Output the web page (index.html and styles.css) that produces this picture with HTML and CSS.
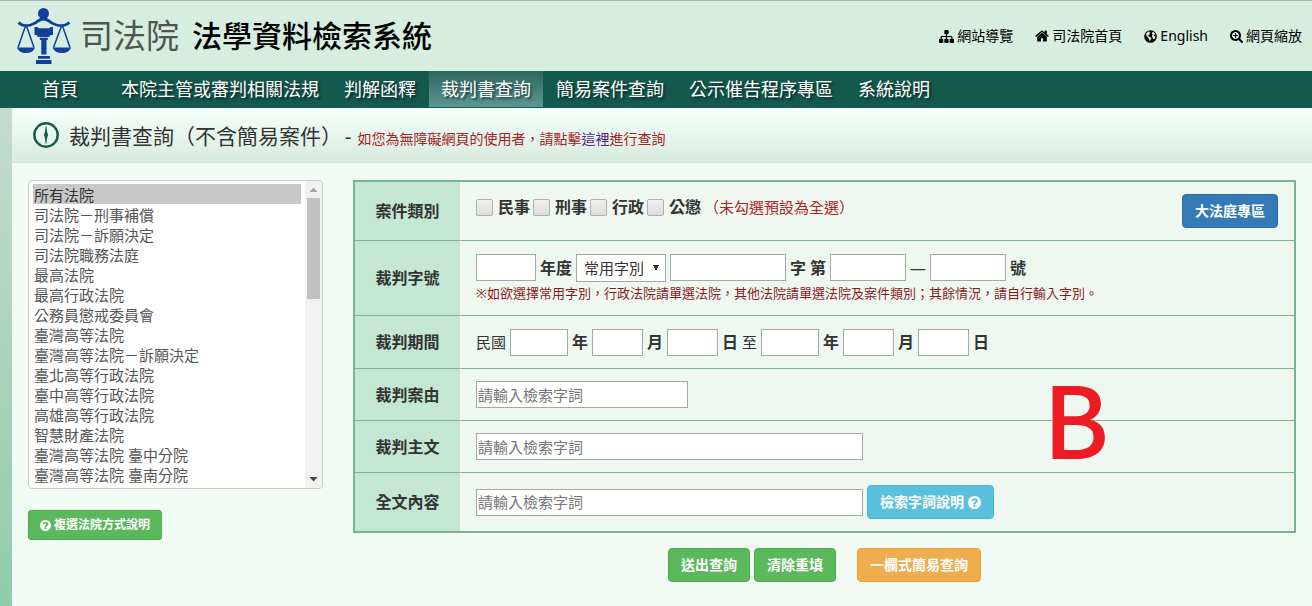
FILE: index.html
```html
<!DOCTYPE html>
<html lang="zh-Hant">
<head>
<meta charset="utf-8">
<meta name="viewport" content="width=device-width, initial-scale=1">
<title>司法院法學資料檢索系統</title>
<link rel="stylesheet" href="styles.css">
</head>
<body>
<svg width="0" height="0" class="sprite" aria-hidden="true">
  <symbol id="i-question" viewBox="128 128 1536 1536"><path d="M1024 1376v-192q0-14-9-23t-23-9h-192q-14 0-23 9t-9 23v192q0 14 9 23t23 9h192q14 0 23-9t9-23zm256-672q0-88-55.500-163t-138.500-116-170-41q-243 0-371 213-15 24 8 42l132 100q7 6 19 6 16 0 25-12 53-68 86-92 34-24 86-24 48 0 85.500 26t37.500 59q0 38-20 61t-68 45q-63 28-115.500 86.500t-52.500 125.500v36q0 14 9 23t23 9h192q14 0 23-9t9-23q0-19 21.500-49.500t54.500-49.500q32-18 49-28.500t46-35 44.500-48 28-60.500 12.500-81zm384 192q0 209-103 385.500t-279.500 279.500-385.500 103-385.500-103-279.500-279.500-103-385.500 103-385.500 279.500-279.500 385.500-103 385.500 103 279.500 279.500 103 385.500z"/></symbol>
</svg>

<header class="header">
  <a class="brand" href="#">
    <svg class="emblem" viewBox="16 7 56 58" aria-hidden="true">
      <g fill="#0f419b">
        <circle cx="43.500" cy="13.500" r="5.500"/>
        <path d="M34.500 27h3l1.500 1.200h10l1.500-1.200h2.500v8h-2.500q-.5 2-2.500 2h-9q-2 0-2.500-2h-2z"/>
        <path d="M41.300 40h5.200v14.500h-5.200zM38 56h12v2.800h-12zM36 60h15.500v4h-15.500zM39.800 37.800h8v2.200h-8z"/>
        <path d="M17 47.500h18q-2 5.500-9 5.500t-9-5.500zM52.500 47.500h18.500q-2 5.500-9 5.500t-9.500-5.500z"/>
      </g>
      <g fill="none" stroke="#0f419b">
        <path d="M18.500 22.500q4.500 4.500 12 2.500 5-1.500 7.500-4 5.500-4 11 0 2.500 2.500 7.500 4 8 2 13-2.500" stroke-width="2.800"/>
        <path d="M25.500 26l-7.500 21.500M26.500 26l7.500 21.500M61.500 26l-8 21.500M62.500 26l7.500 21.500" stroke-width="1.500"/>
      </g>
    </svg>
    <span class="brand-org">司法院</span>
    <span class="brand-name">法學資料檢索系統</span>
  </a>
  <nav class="quick">
    <a href="#"><svg width="15" height="15" viewBox="0 0 1792 1792" aria-hidden="true"><path d="M1792 1248v320q0 40-28 68t-68 28h-320q-40 0-68-28t-28-68v-320q0-40 28-68t68-28h96v-192h-512v192h96q40 0 68 28t28 68v320q0 40-28 68t-68 28h-320q-40 0-68-28t-28-68v-320q0-40 28-68t68-28h96v-192h-512v192h96q40 0 68 28t28 68v320q0 40-28 68t-68 28h-320q-40 0-68-28t-28-68v-320q0-40 28-68t68-28h96v-192q0-52 38-90t90-38h512v-192h-96q-40 0-68-28t-28-68v-320q0-40 28-68t68-28h320q40 0 68 28t28 68v320q0 40-28 68t-68 28h-96v192h512q52 0 90 38t38 90v192h96q40 0 68 28t28 68z"/></svg>網站導覽</a>
    <a href="#"><svg width="14" height="14" viewBox="64 64 1664 1664" aria-hidden="true"><path d="M1472 992v480q0 26-19 45t-45 19h-384v-384h-256v384h-384q-26 0-45-19t-19-45v-480q0-1 .5-3t.5-3l575-474 575 474q1 2 1 6zm223-69l-62 74q-8 9-21 11h-3q-13 0-21-7l-692-577-692 577q-12 8-24 7-13-2-21-11l-62-74q-8-10-7-23.500t11-21.500l719-599q32-26 76-26t76 26l244 204v-195q0-14 9-23t23-9h192q14 0 23 9t9 23v408l219 182q10 8 11 21.500t-7 23.500z"/></svg>司法院首頁</a>
    <a href="#"><svg width="13" height="13" viewBox="0 0 13 13" aria-hidden="true"><circle cx="6.500" cy="6.500" r="6.300"/><path d="M2.200 3.200l2.300-1.700 1.500.5-.5 1.500.5.500-2 1.500 2 1.500 1.500 1-1 2-.8 1.500-1-3-1-1.500-1.200-1zM8.500 1.800l2 1 1 1.800-2 .2.800 1.200 1.200.5-.8 2.500-1.400.3-.8-1.800-.5-1.500.5-1.500-.5-1z" fill="#d7ede0"/></svg>English</a>
    <a href="#"><svg width="13" height="13" viewBox="64 128 1664 1664" aria-hidden="true"><path d="M1088 800v64q0 13-9.500 22.500t-22.500 9.500h-224v224q0 13-9.500 22.500t-22.500 9.500h-64q-13 0-22.500-9.500t-9.500-22.500v-224h-224q-13 0-22.500-9.500t-9.500-22.500v-64q0-13 9.500-22.500t22.500-9.500h224v-224q0-13 9.500-22.500t22.500-9.500h64q13 0 22.500 9.500t9.500 22.500v224h224q13 0 22.500 9.500t9.500 22.500zm128 32q0-185-131.500-316.500t-316.500-131.500-316.500 131.500-131.500 316.500 131.500 316.500 316.500 131.500 316.500-131.500 131.500-316.500zm512 832q0 53-37.500 90.500t-90.500 37.500q-54 0-90-38l-343-342q-179 124-399 124-143 0-273.500-55.500t-225-150-150-225-55.500-273.500 55.500-273.500 150-225 225-150 273.500-55.500 273.500 55.500 225 150 150 225 55.500 273.500q0 220-124 399l343 343q37 37 37 90z"/></svg>網頁縮放</a>
  </nav>
</header>

<nav class="menu">
  <a class="menu-home" href="#">首頁</a>
  <a href="#">本院主管或審判相關法規</a>
  <a href="#">判解函釋</a>
  <a class="is-active" href="#" aria-current="page">裁判書查詢</a>
  <a href="#">簡易案件查詢</a>
  <a href="#">公示催告程序專區</a>
  <a href="#">系統說明</a>
</nav>

<main class="main">
  <div class="title-bar">
    <svg width="26" height="26" viewBox="0 0 26 26" aria-hidden="true"><circle cx="13" cy="13" r="11.700" fill="none" stroke="#175a4c" stroke-width="2.400"/><path d="M13 5.500l2 7.500-2 7.500-2-7.500z" fill="#175a4c"/><path d="M13 4.500v17" stroke="#175a4c"/></svg>
    <h1>裁判書查詢（不含簡易案件）</h1>
    <span class="dash">-</span>
    <p class="title-note">如您為無障礙網頁的使用者，請點擊<a href="#">這裡</a>進行查詢</p>
  </div>

  <form class="search">
    <div class="courts">
      <div class="court-box">
        <select class="court-list" multiple size="15" aria-label="法院">
          <option selected>所有法院</option>
          <option>司法院－刑事補償</option>
          <option>司法院－訴願決定</option>
          <option>司法院職務法庭</option>
          <option>最高法院</option>
          <option>最高行政法院</option>
          <option>公務員懲戒委員會</option>
          <option>臺灣高等法院</option>
          <option>臺灣高等法院－訴願決定</option>
          <option>臺北高等行政法院</option>
          <option>臺中高等行政法院</option>
          <option>高雄高等行政法院</option>
          <option>智慧財產法院</option>
          <option>臺灣高等法院 臺中分院</option>
          <option>臺灣高等法院 臺南分院</option>
          <option>臺灣高等法院 高雄分院</option>
          <option>臺灣高等法院 花蓮分院</option>
          <option>臺灣臺北地方法院</option>
          <option>臺灣士林地方法院</option>
          <option>臺灣新北地方法院</option>
        </select>
        <div class="scrollbar" aria-hidden="true">
          <svg width="17" height="17" viewBox="0 0 17 17"><path d="M4.500 11l4-4.500 4 4.500z" fill="#a3a3a3"/></svg>
          <div class="track"><div class="thumb"></div></div>
          <svg width="17" height="17" viewBox="0 0 17 17"><path d="M4.500 6h8l-4 4.500z" fill="#444"/></svg>
        </div>
      </div>
      <button type="button" class="btn btn-green btn-small"><svg width="11" height="11" aria-hidden="true"><use href="#i-question"/></svg>複選法院方式說明</button>
    </div>

    <div class="criteria">
      <table class="grid">
        <tbody>
        <tr>
          <th scope="row">案件類別</th>
          <td>
            <div class="line line-top">
              <div class="checks">
                <label><input type="checkbox">民事</label>
                <label><input type="checkbox">刑事</label>
                <label><input type="checkbox">行政</label>
                <label><input type="checkbox">公懲</label>
                <span class="hint">（未勾選預設為全選）</span>
              </div>
              <button type="button" class="btn btn-blue">大法庭專區</button>
            </div>
          </td>
        </tr>
        <tr>
          <th scope="row">裁判字號</th>
          <td>
            <div class="line line-number">
              <input class="box w-year" type="text" id="jyear"><label for="jyear">年度</label>
              <select class="pick" aria-label="常用字別"><option>常用字別</option></select>
              <input class="box w-word" type="text" id="jword"><label for="jword">字</label>
              <label for="jno">第</label><input class="box w-no" type="text" id="jno">
              <span class="to">—</span>
              <input class="box w-no" type="text" id="jnoend"><label for="jnoend">號</label>
            </div>
            <p class="remark">※如欲選擇常用字別，行政法院請單選法院，其他法院請單選法院及案件類別；其餘情況，請自行輸入字別。</p>
          </td>
        </tr>
        <tr>
          <th scope="row">裁判期間</th>
          <td>
            <div class="line line-date">
              <span class="plain">民國</span>
              <input class="box w-y" type="text" id="y1"><label for="y1">年</label>
              <input class="box w-md" type="text" id="m1"><label for="m1">月</label>
              <input class="box w-md" type="text" id="d1"><label for="d1">日</label>
              <span class="plain">至</span>
              <input class="box w-y" type="text" id="y2"><label for="y2">年</label>
              <input class="box w-md" type="text" id="m2"><label for="m2">月</label>
              <input class="box w-md" type="text" id="d2"><label for="d2">日</label>
            </div>
          </td>
        </tr>
        <tr>
          <th scope="row"><label for="cause">裁判案由</label></th>
          <td><div class="line"><input class="box w-mid" type="text" id="cause" placeholder="請輸入檢索字詞"></div></td>
        </tr>
        <tr>
          <th scope="row"><label for="holding">裁判主文</label></th>
          <td><div class="line"><input class="box w-long" type="text" id="holding" placeholder="請輸入檢索字詞"></div></td>
        </tr>
        <tr>
          <th scope="row"><label for="full">全文內容</label></th>
          <td>
            <div class="line">
              <input class="box w-long" type="text" id="full" placeholder="請輸入檢索字詞">
              <button type="button" class="btn btn-cyan">檢索字詞說明<svg width="13" height="13" aria-hidden="true"><use href="#i-question"/></svg></button>
            </div>
          </td>
        </tr>
        </tbody>
      </table>
      <span class="mark">B</span>
      <div class="actions">
        <button type="submit" class="btn btn-green">送出查詢</button>
        <button type="reset" class="btn btn-green">清除重填</button>
        <button type="button" class="btn btn-orange">一欄式簡易查詢</button>
      </div>
    </div>
  </form>
</main>
</body>
</html>
```
FILE: styles.css
```css
* { box-sizing: border-box; }

body {
  margin: 0;
  min-height: 100vh;
  display: flex;
  flex-direction: column;
  background: #f2faf4;
  color: #333;
  font-family: "Noto Sans", "Noto Sans CJK TC", sans-serif;
  font-size: 16px;
  line-height: 20px;
}

a { color: inherit; text-decoration: none; }
h1, p { margin: 0; }
button, input, select { font-family: inherit; margin: 0; }
.sprite { position: absolute; }

/* header */
.header {
  display: flex;
  align-items: center;
  justify-content: space-between;
  height: 71px;
  padding: 0 10px 0 16px;
  border-top: 1px solid #a9b8af;
  background: #d7ede0;
  color: #000;
}
.brand { display: flex; align-items: center; white-space: nowrap; }
.emblem { width: 56px; height: 58px; }
.brand-org { margin-left: 8px; font-size: 33px; line-height: 40px; color: #4c5550; }
.brand-name { margin-left: 13px; font-size: 30px; line-height: 40px; font-weight: 500; }
.quick { display: flex; gap: 22px; font-size: 14px; white-space: nowrap; }
.quick a { display: flex; align-items: center; gap: 3px; }

/* main menu */
.menu {
  display: flex;
  gap: 1px;
  height: 37px;
  padding: 0 12px;
  background: #14594d;
  color: #fff;
  font-size: 18px;
  line-height: 36px;
  white-space: nowrap;
  text-shadow: 2px 2px 2px rgba(0, 0, 0, .5);
}
.menu a { padding: 0 12px; margin-bottom: 1px; }
.menu .menu-home { padding: 0 30px; }
.menu .is-active { background: linear-gradient(#2b665f, #5c9690); }

/* page body with the coloured strip at its left */
.main {
  flex: 1;
  padding-left: 12px;
  background: linear-gradient(#c5dbcf, #90cca8) left / 12px 100% no-repeat;
}
.title-bar {
  display: flex;
  align-items: center;
  height: 55px;
  padding-left: 21px;
  background: linear-gradient(#f6fffb, #d7ebdf);
  border-bottom: 1px solid #d3e6db;
  white-space: nowrap;
}
.title-bar h1 { margin-left: 10px; padding-top: 2px; font-size: 21px; line-height: 28px; font-weight: 400; }
.dash { margin-left: 3px; padding-top: 4px; font-size: 20px; }
.title-note { margin-left: 6px; padding-top: 8px; font-size: 14px; color: #a52323; }
.title-note a { color: #551a8b; }

/* search form */
.search { display: flex; align-items: flex-start; gap: 30px; padding: 17px 16px 24px; }
.courts { flex: none; width: 295px; }
.court-box {
  display: flex;
  height: 309px;
  border: 1px solid #c6ccc8;
  border-radius: 4px;
  background: #fff;
  overflow: hidden;
}
.court-list {
  flex: 1;
  min-width: 0;
  padding: 3px 4px 0;
  border: 0;
  background: none;
  color: #555;
  font-size: 15px;
  outline: none;
  scrollbar-width: none;
}
.court-list option { height: 20px; min-height: 20px; padding: 0 1px; }
.court-list option:checked { background: #c8c8c8 linear-gradient(#c8c8c8, #c8c8c8); color: #333; }
.scrollbar { display: flex; flex-direction: column; width: 17px; background: #f1f1f1; }
.track { flex: 1; padding: 0 2px; }
.thumb { height: 37%; background: #c1c1c1; }

/* buttons */
.btn {
  display: inline-flex;
  align-items: center;
  justify-content: center;
  gap: 4px;
  height: 34px;
  padding: 0 12px;
  border: 1px solid;
  border-radius: 4px;
  color: #fff;
  font-size: 14px;
  font-weight: 700;
  line-height: 20px;
  white-space: nowrap;
}
.btn svg { fill: currentColor; }
.btn-small { height: 30px; gap: 3px; margin-top: 21px; padding: 0 11px; font-size: 12px; border-radius: 3px; }
.btn-green { background: #5cb85c; border-color: #4cae4c; }
.btn-blue { background: #337ab7; border-color: #2e6da4; }
.btn-cyan { background: #5bc0de; border-color: #46b8da; }
.btn-orange { background: #f0ad4e; border-color: #eea236; }

/* criteria table */
.criteria { position: relative; flex: 1; min-width: 0; }
.grid {
  width: 100%;
  border: 2px solid #7bb391;
  border-spacing: 0;
  background: #eef8f1;
}
.grid th, .grid td { padding: 12px 16px 12px 15px; border-bottom: 1px solid #7bb391; }
.grid tr:last-child > * { border-bottom: 0; }
.grid th {
  width: 106px;
  padding: 0;
  background: #c3e7d3;
  border-right: 1px solid #eef8f1;
  text-align: center;
}
.line { display: flex; align-items: center; gap: 4px; white-space: nowrap; }
.line label { font-weight: 700; }
.line-top { justify-content: space-between; align-items: flex-start; }
.line-number { height: 29px; }
.line-date { height: 28px; }
.plain { font-size: 15px; }
.to { width: 16px; text-align: center; }

.checks { display: flex; align-items: center; gap: 3px; padding-top: 3px; }
.checks label { display: flex; align-items: center; gap: 5px; }
.checks input {
  appearance: none;
  width: 17px;
  height: 17px;
  border: 1px solid #b0b0b0;
  border-radius: 2px;
  background: linear-gradient(#f0f0f0, #dcdcdc);
}
.hint { font-size: 15px; color: #b22222; }
.remark { padding-top: 1px; font-size: 13px; color: #8b1a1a; }

.box {
  height: 27px;
  padding: 1px;
  border: 1px solid #a3aaa6;
  background: #fff;
  font-size: 15px;
}
.box::placeholder { color: #757575; }
.w-year { width: 60px; }
.w-word { width: 116px; }
.w-no { width: 76px; }
.w-y { width: 58px; }
.w-md { width: 51px; }
.w-mid { width: 212px; }
.w-long { width: 387px; }
.pick {
  appearance: none;
  width: 90px;
  height: 28px;
  padding: 0 7px;
  border: 1px solid #a3aaa6;
  border-radius: 0;
  background: linear-gradient(to bottom right, #333 50%, transparent 50%) right 6px center / 3px 6px no-repeat,
    linear-gradient(to bottom left, #333 50%, transparent 50%) right 9px center / 3px 6px no-repeat, #fff;
  color: #333;
  font-size: 15px;
}

.actions { display: flex; justify-content: center; gap: 4px; margin-top: 15px; }
.actions .btn-orange { margin-left: 17px; }

/* large letter laid over the table */
.mark {
  position: absolute;
  top: 186px;
  right: 187px;
  color: #ed1c24;
  font-family: "Noto Sans CJK TC", sans-serif;
  font-size: 99px;
  font-weight: 500;
  line-height: 100px;
}
```
